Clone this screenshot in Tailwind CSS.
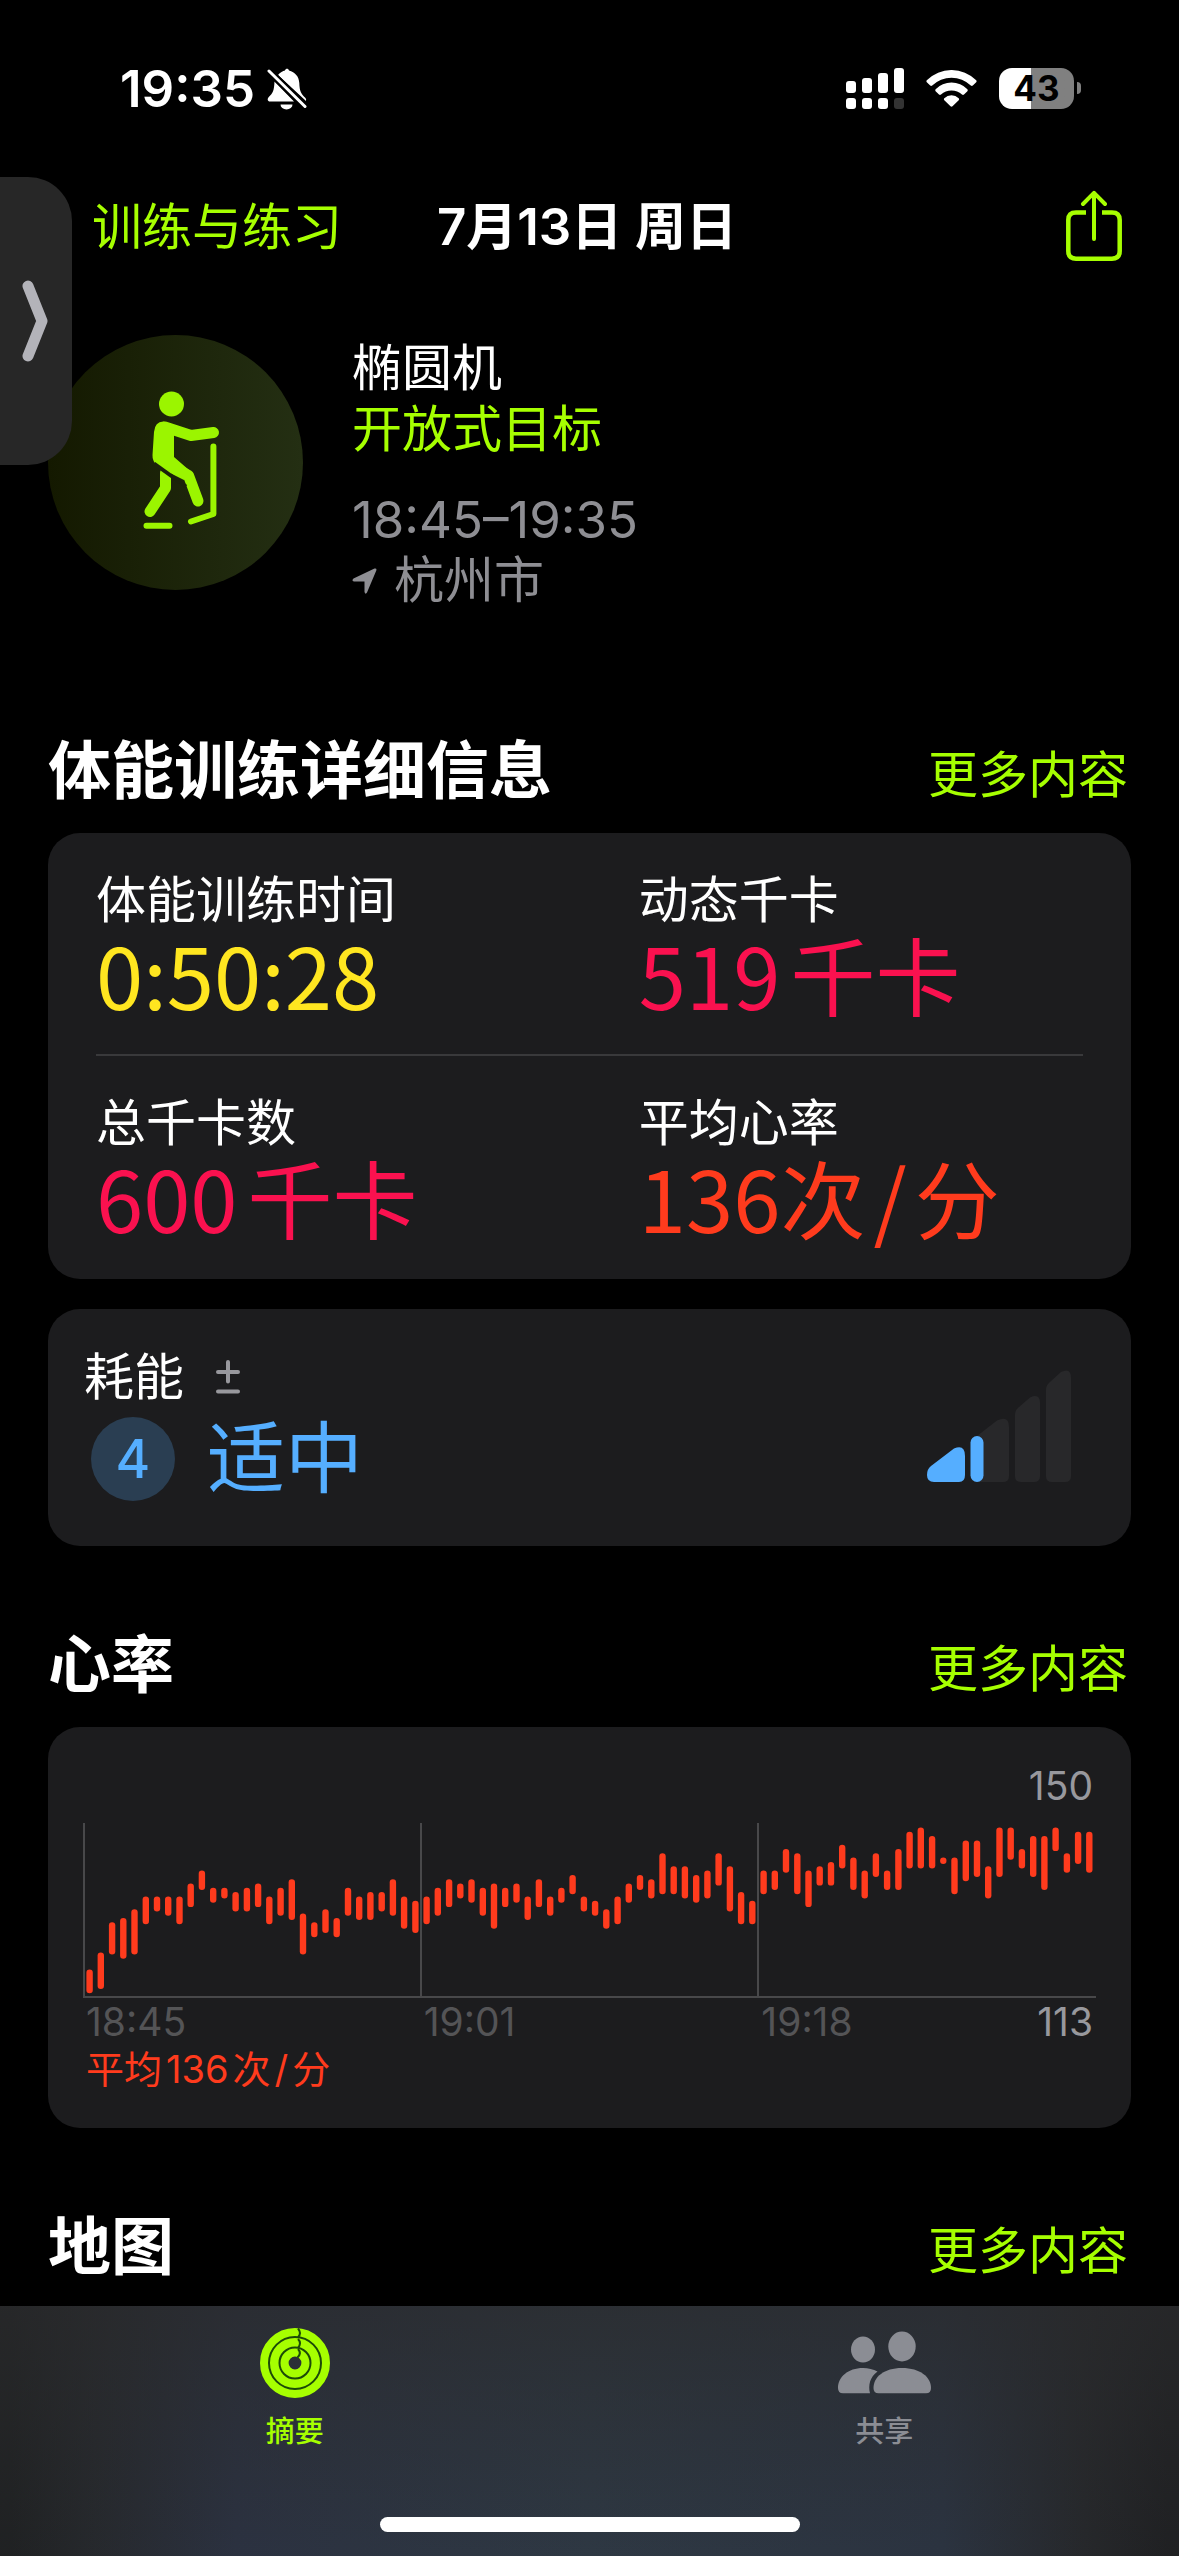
<!DOCTYPE html>
<html lang="zh-CN">
<head>
<meta charset="utf-8">
<meta name="viewport" content="width=device-width, initial-scale=1">
<title>体能训练</title>
<script src="https://cdn.jsdelivr.net/npm/@tailwindcss/browser@4"></script>
</head>
<body class="bg-black text-white">
<div class="relative flex min-h-screen flex-col font-[Inter,'Noto_Sans_CJK_SC',sans-serif] text-[50px]">

  <!-- Status bar -->
  <header class="flex h-44 items-center justify-between pl-[120px] pr-[98px]">
    <div class="flex items-center gap-3">
      <time class="text-[51px] leading-none font-semibold">19:35</time>
      <svg class="h-[43px] w-[40px]" viewBox="0 0 40 43" fill="#fff" aria-label="静音">
        <path d="M11 8C13 5.500 16 4 18 3.500 18.500 1.300 21.500 1.300 22 3.500 28 5 32 9.500 32.300 16 32.600 24 34 27 38.500 31Q39.500 32.500 39 34z"/>
        <path d="M7.500 14.500 27 34.500H3C.5 34.500 0 32 1.800 30 6 26 7 24 7.500 14.500z"/>
        <path d="M13.500 37.500h12a6 5 0 0 1-12 0z"/>
        <path d="M2 4 38 39.500" stroke="#000" stroke-width="7"/>
        <path d="M2 4 38 39.500" stroke="#fff" stroke-width="3" stroke-linecap="round"/>
      </svg>
    </div>
    <div class="flex items-center gap-[22px]">
      <svg class="h-[41px] w-[58px]" viewBox="0 0 58 41" fill="#fff" aria-label="信号">
        <rect x="0" y="13" width="10" height="12" rx="3"/><rect x="16" y="10" width="10" height="15" rx="3"/>
        <rect x="32" y="5" width="10" height="20" rx="3"/><rect x="48" y="0" width="10" height="25" rx="3"/>
        <rect x="0" y="30" width="10" height="11" rx="3"/><rect x="16" y="30" width="10" height="11" rx="3"/>
        <rect x="32" y="30" width="10" height="11" rx="3"/><rect x="48" y="30" width="10" height="11" rx="3" fill="#333"/>
      </svg>
      <svg class="h-[37px] w-[51px]" viewBox="0 0 51 37" fill="#fff" aria-label="无线局域网">
        <path d="M.8 10.200a35 35 0 0 1 49.400 0q.8 1 0 2l-3.400 3.400q-1 .8-2 0a27.500 27.500 0 0 0-38.600 0q-1 .8-2 0L.8 12.200q-.8-1 0-2z"/>
        <path d="M9.600 19.200a22.500 22.500 0 0 1 31.800 0q.8 1 0 2L38 24.600q-1 .8-2 0a15.300 15.300 0 0 0-21 0q-1 .8-2 0l-3.400-3.400q-.8-1 0-2z"/>
        <path d="M18.300 28.200a10.500 10.500 0 0 1 14.400 0q.8 1 0 2l-6.200 6.100q-1 .8-2 0l-6.200-6.100q-.8-1 0-2z"/>
      </svg>
      <div class="flex items-center gap-[3px]">
        <div class="flex h-[41px] w-[75px] items-center justify-center rounded-[13px] bg-linear-to-r from-white from-43% to-[#808080] to-43% text-[35px] leading-none font-bold text-black">43</div>
        <div class="h-3 w-1 rounded-r-full bg-[#808080]"></div>
      </div>
    </div>
  </header>

  <!-- Navigation -->
  <nav class="grid h-[102px] grid-cols-[1fr_auto_1fr] items-center pl-[92px] pr-[57px]">
    <a href="#" class="-mr-24 whitespace-nowrap text-[#a6ff00]">训练与练习</a>
    <h1 class="-ml-10 text-[51px] font-semibold">7月13日 周日</h1>
    <button type="button" class="justify-self-end pb-1" aria-label="分享">
      <svg class="h-[71px] w-[56px]" viewBox="0 0 56 71" fill="none" stroke="#a6ff00" stroke-width="4.500">
        <path d="M20 22.500H10Q2.300 22.500 2.300 30V61Q2.300 68.700 10 68.700H46Q53.700 68.700 53.700 61V30Q53.700 22.500 46 22.500H36"/>
        <path d="M28 49V3M17 14 28 2.800 39 14" stroke-width="4" stroke-linecap="round" stroke-linejoin="round"/>
      </svg>
    </button>
  </nav>

  <!-- Drawer handle over the left edge -->
  <button type="button" class="absolute left-0 top-[177px] z-10 flex h-72 w-[72px] items-center justify-center rounded-r-[44px] bg-[#272727]" aria-label="展开">
    <svg class="h-[82px] w-[28px]" viewBox="0 0 28 82" fill="none" stroke="#b3b3b9" stroke-width="11" stroke-linecap="round" stroke-linejoin="round"><path d="M6 6 20 41 6 76"/></svg>
  </button>

  <main class="flex flex-col">
    <section class="flex gap-[49px] px-12 pt-[57px] pb-[41px]">
      <svg class="size-[255px] shrink-0" viewBox="48 335 255 255" aria-label="椭圆机">
        <defs><linearGradient id="disc"><stop stop-color="#141900"/><stop offset="1" stop-color="#242f13"/></linearGradient></defs>
        <circle cx="175.500" cy="462.500" r="127.500" fill="url(#disc)"/>
        <g fill="none" stroke="#9bf500" stroke-linecap="round" stroke-linejoin="round">
          <circle cx="171.500" cy="404" r="12.500" fill="#9bf500" stroke="none"/>
          <path d="M165 427 191 435.500 213.500 432.500" stroke-width="11"/>
          <path d="M154 432Q155 421 164 421.500L174 427V457L193 473.500 184 480 158 467Q152 461 152.500 455z" fill="#9bf500" stroke="none"/>
          <path d="M163 461 188.500 475.500 198 501" stroke-width="11"/>
          <path d="M165.500 473V488L150 511.500" stroke-width="11"/>
          <path d="M154 463.500 186 486.500" stroke="#1b220a" stroke-width="4" stroke-linecap="butt"/>
          <path d="M146.500 525.700H169.500M213.400 446.500V514L191 521.500" stroke-width="6"/>
        </g>
      </svg>
      <div class="pt-[3px] leading-[61px]">
        <p>椭圆机</p>
        <p class="text-[#a6ff00]">开放式目标</p>
        <p class="mt-[29px] text-[51px] text-[#8e8e93]">18:45–19:35</p>
        <p class="flex items-center gap-[17px] text-[#8e8e93]">
          <svg class="h-[26px] w-[25px]" viewBox="0 0 25 26" fill="#8e8e93" aria-hidden="true"><path d="M22.500.5Q25 0 24.300 2.500L15 24.500Q13.500 27 12.500 24V13.500H2Q-.8 12.700 1.500 10.500z"/></svg>
          杭州市
        </p>
      </div>
    </section>

    <section>
      <div class="flex items-baseline justify-between px-12 pt-[82px] pb-[27px]">
        <h2 class="text-[63px] leading-[72px] font-bold">体能训练详细信息</h2>
        <a href="#" class="pr-[3px] leading-[60px] text-[#a6ff00]">更多内容</a>
      </div>
      <div class="mx-12 rounded-[32px] bg-[#1c1c1e] px-12">
        <dl class="grid grid-cols-[55fr_45fr]">
          <div class="border-b-2 border-[#39393b] pt-[37px] pb-[38px]">
            <dt class="leading-[60px]">体能训练时间</dt>
            <dd class="font-['Noto_Sans_CJK_SC',sans-serif] text-[85px] leading-[86px] text-[#ffe620]">0:50:28</dd>
          </div>
          <div class="border-b-2 border-[#39393b] pt-[37px] pb-[38px]">
            <dt class="leading-[60px]">动态千卡</dt>
            <dd class="flex gap-[10px] font-['Noto_Sans_CJK_SC',sans-serif] text-[85px] leading-[86px] text-[#fa114f]">519<span>千卡</span></dd>
          </div>
          <div class="pt-[37px] pb-10">
            <dt class="leading-[60px]">总千卡数</dt>
            <dd class="flex gap-[10px] font-['Noto_Sans_CJK_SC',sans-serif] text-[85px] leading-[86px] text-[#fa114f]">600<span>千卡</span></dd>
          </div>
          <div class="pt-[37px] pb-10">
            <dt class="leading-[60px]">平均心率</dt>
            <dd class="flex font-['Noto_Sans_CJK_SC',sans-serif] text-[85px] leading-[86px] text-[#ff3b1d]">136<span>次</span><span class="mx-2">/</span><span>分</span></dd>
          </div>
        </dl>
      </div>
      <div class="mx-12 mt-[30px] flex items-center justify-between rounded-[32px] bg-[#1c1c1e] pt-[38px] pr-[60px] pb-[42px] pl-9">
        <div>
          <div class="flex items-center gap-8 leading-[60px]">
            <h3>耗能</h3>
            <svg class="h-[34px] w-6" viewBox="0 0 24 34" stroke="#98989d" stroke-width="4" stroke-linecap="round" aria-label="加减"><path d="M2 12H22M12 2V21.500M2 31.500H22"/></svg>
          </div>
          <div class="mt-[7px] flex items-center gap-8 pl-[7px]">
            <span class="flex size-[84px] items-center justify-center rounded-full bg-[#2a3e52] text-[53px] leading-none font-medium text-[#55aeff]">4</span>
            <span class="text-[78px] leading-[90px] text-[#55aeff]">适中</span>
          </div>
        </div>
        <svg class="h-28 w-36" viewBox="0 0 144 112" fill="#28282a" aria-hidden="true">
          <path d="M119 20Q119 15 123 12L134 2Q144-3 144 8V106Q144 112 138 112H125Q119 112 119 106z"/>
          <path d="M88 45Q88 40 92 37L103 27.500Q113 23 113 33V106Q113 112 107 112H94Q88 112 88 106z"/>
          <path d="M50 66 70 50.500Q82 45 82 57V106Q82 112 76 112H50z"/>
          <path d="M4 96 27 78.500Q38 74 38 86V105Q38 112 32 112H7Q0 112 0 105 0 99 4 96z" fill="#55aeff"/>
          <rect x="43.500" y="66" width="13" height="46" rx="6.500" fill="#55aeff"/>
        </svg>
      </div>
    </section>

    <section>
      <div class="flex items-baseline justify-between px-12 pt-[82px] pb-[27px]">
        <h2 class="text-[63px] leading-[72px] font-bold">心率</h2>
        <a href="#" class="pr-[3px] leading-[60px] text-[#a6ff00]">更多内容</a>
      </div>
      <div class="mx-12 rounded-[32px] bg-[#1c1c1e] px-[35px] pt-[35px] pb-9 text-[39px] leading-[48px]">
        <p class="pr-[3px] text-right text-[#98989d]">150</p>
        <svg id="chart" class="mt-[13px] block h-auto w-full" viewBox="0 0 1013 175" fill="none" aria-label="心率图表">
          <path d="M1 0V174H1013M338 0V174M675 0V174" stroke="#48484a" stroke-width="2"/>
          <g id="bars" stroke="#ff3b1d" stroke-width="6.400" stroke-linecap="round"></g>
        </svg>
        <div class="grid grid-cols-3 text-[#545456]">
          <span class="px-[3px]">18:45</span>
          <span class="px-[3px]">19:01</span>
          <span class="flex justify-between px-[3px]">19:18<span class="text-[#98989d]">113</span></span>
        </div>
        <p class="flex gap-1 px-[3px] text-[38px] leading-[46px] text-[#ff3b1d]"><span>平均</span><span>136</span><span>次</span><span>/</span><span>分</span></p>
      </div>
    </section>

    <section class="flex items-baseline justify-between px-12 pt-[82px] pb-[22px]">
      <h2 class="text-[63px] leading-[72px] font-bold">地图</h2>
      <a href="#" class="pr-[3px] leading-[60px] text-[#a6ff00]">更多内容</a>
    </section>
  </main>

  <!-- Tab bar -->
  <footer class="sticky bottom-0 mt-auto h-[250px] bg-[linear-gradient(to_right,#1e1f1f_1%,#25272a_8%,#2b3140_20%,#2e3843_50%,#2b3340_80%,#252628_92%,#1e1e1f_99%)]">
    <div class="flex h-full flex-col justify-between bg-linear-to-b from-[#2a2b2d]/70 to-[#2c3645]/10">
      <div class="grid grid-cols-2 pt-[22px] text-[29px] leading-[40px] font-medium">
        <a href="#" class="flex flex-col items-center gap-[14px] text-[#a6ff00]">
          <svg class="size-[70px]" viewBox="0 0 70 70" fill="none" aria-hidden="true">
            <circle cx="35" cy="35" r="20.700" stroke="#a6ff00" stroke-width="28.600"/>
            <g stroke="#1c4a08" stroke-width="2"><circle cx="35" cy="35" r="26"/><circle cx="35" cy="35" r="15.500"/>
            <path d="M38 .5Q42 5 38 9.300M38 11Q42 15 38 20M38 21Q42 25.500 37.500 29.500"/></g>
          </svg>
          摘要
        </a>
        <a href="#" class="flex flex-col items-center gap-[14px] text-[#8b8d94]">
          <svg class="h-[70px] w-[93px]" viewBox="0 0 93 70" fill="#8b8d94" aria-hidden="true">
            <ellipse cx="25" cy="21.500" rx="12" ry="13"/><ellipse cx="64" cy="18.500" rx="13.700" ry="15"/>
            <path d="M0 60C0 49 10 40 25 40Q33 40 39.500 43.500C32 49 30 57 32 65.300H5Q0 65.300 0 60z"/>
            <path d="M35.500 60C35.500 49 46 40 64 40S93 49 93 60Q93 65.300 88 65.300H40.500Q35.500 65.300 35.500 60z"/>
          </svg>
          共享
        </a>
      </div>
      <div class="mx-auto mb-6 h-[15px] w-[420px] rounded-full bg-white"></div>
    </div>
  </footer>
</div>

<script>
  // Highest and lowest heart rate of each interval, in beats per minute.
  const ranges = [
    [117,113],[121,114],[128,122],[129,121],[131,122],[134,129],[134,132],[134,131],[134,129],[137,133],
    [140,137],[136,134],[136,135],[135,132],[136,132],[137,133],[134,129],[136,131],[138,130],[130,122],
    [128,126],[131,127],[129,126],[136,131],[134,130],[135,130],[135,132],[138,131],[134,128],[133,127],
    [134,129],[136,131],[138,133],[137,135],[138,134],[136,131],[137,128],[136,133],[137,134],[134,130],
    [138,133],[134,131],[136,134],[139,136],[134,132],[133,131],[131,128],[134,129],[137,134],[139,137],
    [138,135],[144,136],[141,136],[141,135],[139,134],[140,135],[144,138],[141,132],[135,129],[133,129],
    [140,136],[140,137],[145,141],[144,136],[140,133],[141,138],[142,138],[146,142],[143,137],[140,135],
    [144,140],[140,137],[145,137],[149,142],[150,142],[148,142],[143,143],[143,136],[147,139],[147,140],
    [141,135],[150,140],[150,144],[145,142],[148,140],[148,137],[150,146],[144,141],[149,143],[149,141]
  ];
  const y = bpm => (7.7 + (150 - bpm) * 4.307).toFixed(1);
  const group = document.getElementById('bars');
  ranges.forEach(([high, low], i) => {
    const line = document.createElementNS('http://www.w3.org/2000/svg', 'line');
    const x = (6.6 + i * 11.233).toFixed(1);
    line.setAttribute('x1', x);
    line.setAttribute('x2', x);
    line.setAttribute('y1', y(high));
    line.setAttribute('y2', y(low));
    group.appendChild(line);
  });
</script>
</body>
</html>
